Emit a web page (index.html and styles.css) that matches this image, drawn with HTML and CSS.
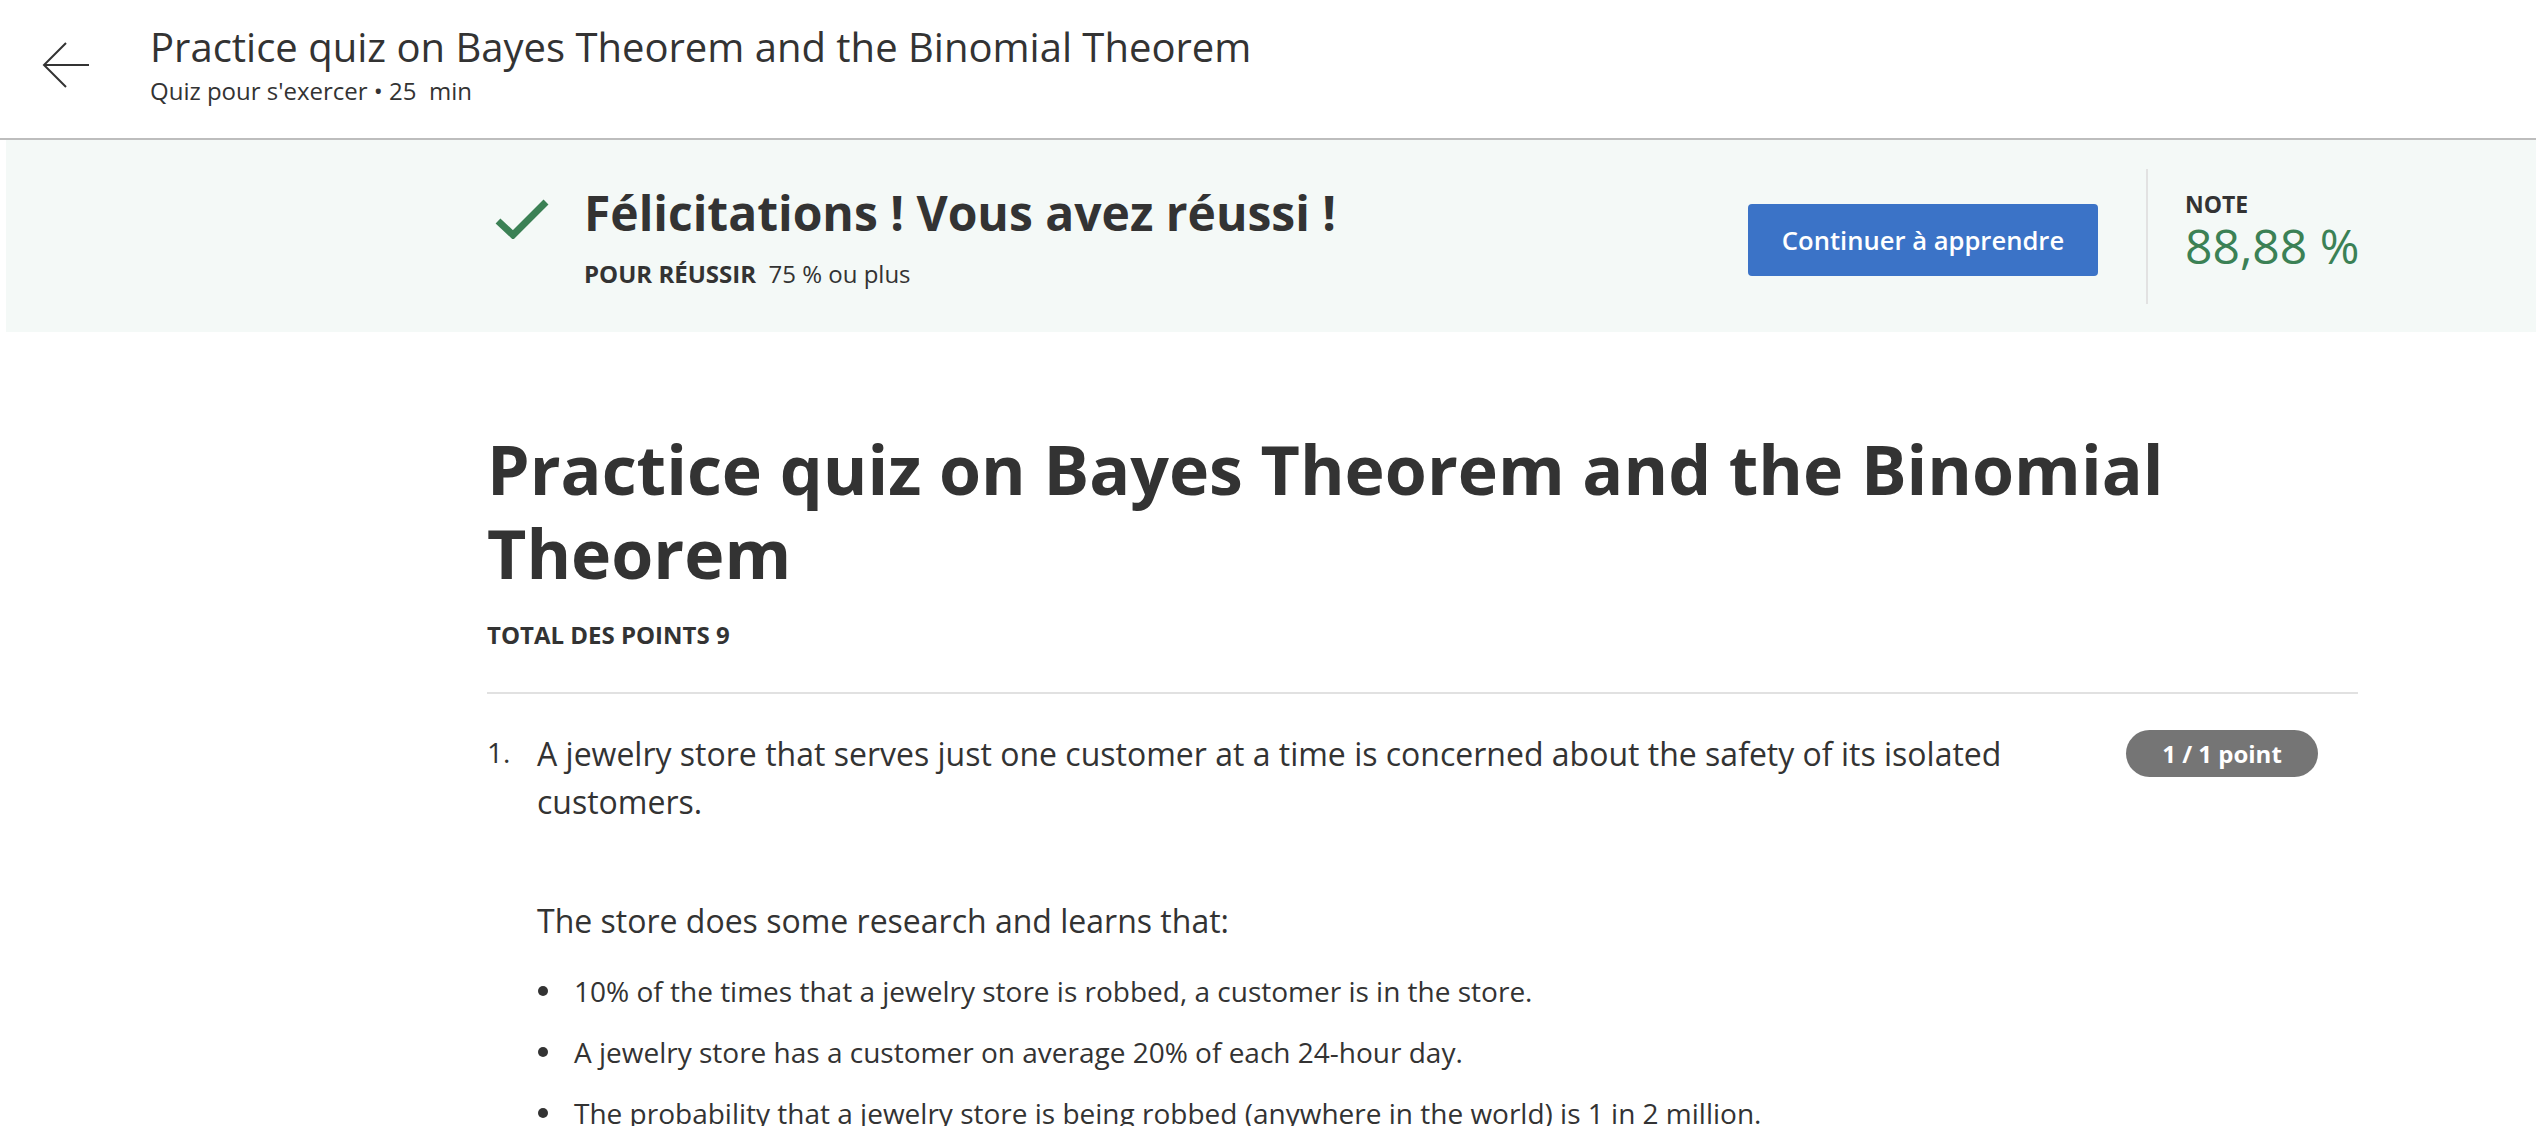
FILE: index.html
```html
<!DOCTYPE html>
<html lang="fr">
<head>
<meta charset="utf-8">
<title>Practice quiz on Bayes Theorem and the Binomial Theorem</title>
<link rel="stylesheet" href="styles.css">
</head>
<body>
<header class="topbar">
  <a class="back" href="#" aria-label="Retour">
    <svg viewBox="0 0 48 48" width="48" height="48" aria-hidden="true"><path d="M47 23H2M24 1L2 23L24 45" fill="none" stroke="#333" stroke-width="2"/></svg>
  </a>
  <div class="topbar-text">
    <div class="topbar-title">Practice quiz on Bayes Theorem and the Binomial Theorem</div>
    <div class="topbar-sub">Quiz pour s'exercer • 25 &nbsp;min</div>
  </div>
</header>

<section class="result">
  <div class="result-inner">
    <div class="result-left">
      <svg class="check" viewBox="0 0 54 40" width="54" height="40" aria-hidden="true"><path d="M3 22L18 36L51 3" fill="none" stroke="#3b8155" stroke-width="7"/></svg>
      <div class="result-text">
        <div class="result-title">Félicitations ! Vous avez réussi !</div>
        <div class="result-sub"><strong>POUR RÉUSSIR</strong>&nbsp; 75 % ou plus</div>
      </div>
    </div>
    <div class="result-right">
      <button class="continue">Continuer à apprendre</button>
      <div class="divider"></div>
      <div class="grade">
        <div class="grade-label">NOTE</div>
        <div class="grade-value">88,88 %</div>
      </div>
    </div>
  </div>
</section>

<main class="content">
  <h1 class="quiz-title">Practice quiz on Bayes Theorem and the Binomial Theorem</h1>
  <div class="total">TOTAL DES POINTS 9</div>
  <hr class="rule">
  <div class="question">
    <div class="qnum">1.</div>
    <div class="qbody">
      <p class="qtext">A jewelry store that serves just one customer at a time is concerned about the safety of its isolated customers.</p>
      <p class="qtext qpara">The store does some research and learns that:</p>
      <ul class="facts">
        <li>10% of the times that a jewelry store is robbed, a customer is in the store.</li>
        <li>A jewelry store has a customer on average 20% of each 24-hour day.</li>
        <li>The probability that a jewelry store is being robbed (anywhere in the world) is 1 in 2 million.</li>
      </ul>
    </div>
    <div class="badge">1 / 1 point</div>
  </div>
</main>
</body>
</html>
```

FILE: styles.css
```css
html, body {
  margin: 0;
  padding: 0;
  background: #fff;
}
body {
  font-family: "Open Sans", "Noto Sans", sans-serif;
  color: #333;
  overflow: hidden;
}

/* Top bar */
.topbar {
  display: flex;
  align-items: flex-start;
  height: 138px;
  border-bottom: 2px solid #bdbdbd;
  padding-left: 42px;
}
.back {
  display: block;
  margin-top: 42px;
  width: 48px;
  height: 48px;
}
.back svg { display: block; }
.topbar-text {
  margin-left: 60px;
  padding-top: 23px;
}
.topbar-title {
  font-size: 40px;
  line-height: 48px;
  font-weight: 400;
}
.topbar-sub {
  font-size: 24px;
  line-height: 36px;
  margin-top: 2px;
}

/* Result band */
.result {
  margin-left: 6px;
  height: 192px;
  background: #f4f9f7;
  display: flex;
  align-items: center;
}
.result-inner {
  margin-left: 481px;
  width: 1871px;
  display: flex;
  align-items: center;
  justify-content: space-between;
}
.result-left {
  display: flex;
  align-items: flex-start;
}
.check {
  display: block;
  margin-left: 8px;
  margin-top: 16px;
  flex: none;
}
.result-text {
  margin-left: 35px;
}
.result-title {
  font-size: 48px;
  line-height: 60px;
  font-weight: 700;
}
.result-sub {
  margin-top: 15px;
  font-size: 24px;
  line-height: 32px;
}
.result-sub strong { font-weight: 700; }
.result-right {
  display: flex;
  align-items: center;
}
.continue {
  width: 350px;
  height: 72px;
  margin-top: 8px;
  border: none;
  border-radius: 4px;
  background: #3b73c7;
  color: #fff;
  font-family: "Open Sans", "Noto Sans", sans-serif;
  font-size: 25.6px;
  font-weight: 600;
  padding: 0;
}
.divider {
  width: 2px;
  height: 135px;
  background: #e2e2e2;
  margin-left: 48px;
  margin-right: 37px;
}
.grade {
  width: 173px;
  margin-bottom: 9px;
}
.grade-label {
  font-size: 23px;
  line-height: 28px;
  font-weight: 700;
}
.grade-value {
  font-size: 48px;
  line-height: 56px;
  color: #3b8155;
  white-space: nowrap;
}

/* Main content */
.content {
  margin-left: 487px;
  width: 1871px;
  padding-top: 95px;
}
.quiz-title {
  margin: 0;
  font-size: 68px;
  line-height: 84px;
  font-weight: 700;
}
.total {
  margin-top: 24px;
  font-size: 24px;
  line-height: 32px;
  font-weight: 700;
}
.rule {
  margin: 41px 0 0;
  border: none;
  height: 2px;
  background: #e1e1e1;
}
.question {
  display: flex;
  align-items: flex-start;
  margin-top: 36px;
}
.qnum {
  width: 50px;
  flex: none;
  font-size: 28px;
  line-height: 48px;
  margin-top: -2px;
}
.qbody {
  flex: 1;
  margin-right: 40px;
}
.qtext {
  margin: 0;
  font-size: 32px;
  line-height: 48px;
}
.qpara {
  margin-top: 71px;
}
.facts {
  list-style: none;
  margin: 26px 0 0;
  padding: 0;
}
.facts li {
  display: flex;
  align-items: center;
  font-size: 28px;
  line-height: 40px;
  margin-bottom: 21px;
}
.facts li::before {
  content: "";
  flex: none;
  width: 10px;
  height: 10px;
  border-radius: 50%;
  background: #333;
  margin-left: 1px;
  margin-right: 26px;
}
.badge {
  flex: none;
  width: 192px;
  height: 47px;
  border-radius: 24px;
  background: #757575;
  color: #fff;
  font-size: 24px;
  font-weight: 700;
  line-height: 47px;
  text-align: center;
  margin-right: 40px;
}
```
